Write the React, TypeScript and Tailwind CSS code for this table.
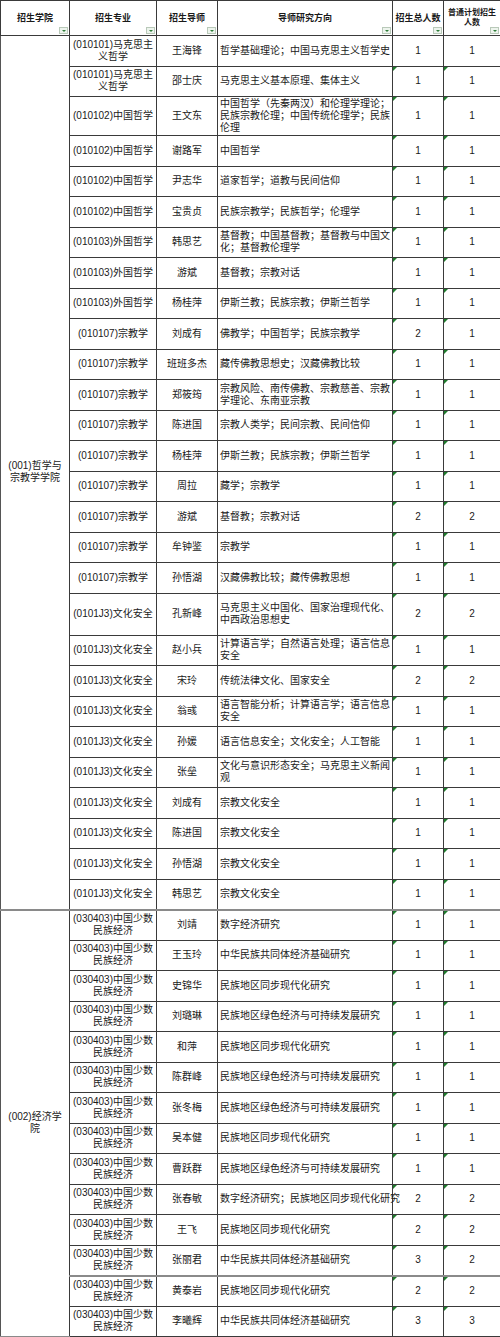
import React from "react";

type Row = {
  major: string[];
  tutor: string;
  dir: string[];
  total: number;
  plan: number;
  h?: string;
  grayTop?: boolean;
};

const m = (code: string, name: string) => [`(${code})${name}`];
const MKS = ["(010101)马克思主", "义哲学"];
const SSMZ = ["(030403)中国少数", "民族经济"];

const philosophy: Row[] = [
  { major: MKS, tutor: "王海锋", dir: ["哲学基础理论；中国马克思主义哲学史"], total: 1, plan: 1 },
  { major: MKS, tutor: "邵士庆", dir: ["马克思主义基本原理、集体主义"], total: 1, plan: 1 },
  {
    major: m("010102", "中国哲学"),
    tutor: "王文东",
    dir: ["中国哲学（先秦两汉）和伦理学理论；", "民族宗教伦理；中国传统伦理学；民族", "伦理"],
    total: 1,
    plan: 1,
    h: "h-[39px]",
  },
  { major: m("010102", "中国哲学"), tutor: "谢路军", dir: ["中国哲学"], total: 1, plan: 1 },
  { major: m("010102", "中国哲学"), tutor: "尹志华", dir: ["道家哲学；道教与民间信仰"], total: 1, plan: 1 },
  { major: m("010102", "中国哲学"), tutor: "宝贵贞", dir: ["民族宗教学；民族哲学；伦理学"], total: 1, plan: 1 },
  { major: m("010103", "外国哲学"), tutor: "韩思艺", dir: ["基督教；中国基督教；基督教与中国文", "化；基督教伦理学"], total: 1, plan: 1 },
  { major: m("010103", "外国哲学"), tutor: "游斌", dir: ["基督教；宗教对话"], total: 1, plan: 1 },
  { major: m("010103", "外国哲学"), tutor: "杨桂萍", dir: ["伊斯兰教；民族宗教；伊斯兰哲学"], total: 1, plan: 1 },
  { major: m("010107", "宗教学"), tutor: "刘成有", dir: ["佛教学；中国哲学；民族宗教学"], total: 2, plan: 1 },
  { major: m("010107", "宗教学"), tutor: "班班多杰", dir: ["藏传佛教思想史；汉藏佛教比较"], total: 1, plan: 1 },
  { major: m("010107", "宗教学"), tutor: "郑筱筠", dir: ["宗教风险、南传佛教、宗教慈善、宗教", "学理论、东南亚宗教"], total: 1, plan: 1 },
  { major: m("010107", "宗教学"), tutor: "陈进国", dir: ["宗教人类学；民间宗教、民间信仰"], total: 1, plan: 1 },
  { major: m("010107", "宗教学"), tutor: "杨桂萍", dir: ["伊斯兰教；民族宗教；伊斯兰哲学"], total: 1, plan: 1 },
  { major: m("010107", "宗教学"), tutor: "周拉", dir: ["藏学；宗教学"], total: 1, plan: 1 },
  { major: m("010107", "宗教学"), tutor: "游斌", dir: ["基督教；宗教对话"], total: 2, plan: 2 },
  { major: m("010107", "宗教学"), tutor: "牟钟鉴", dir: ["宗教学"], total: 1, plan: 1 },
  { major: m("010107", "宗教学"), tutor: "孙悟湖", dir: ["汉藏佛教比较；藏传佛教思想"], total: 1, plan: 1 },
  {
    major: m("0101J3", "文化安全"),
    tutor: "孔新峰",
    dir: ["马克思主义中国化、国家治理现代化、", "中西政治思想史"],
    total: 2,
    plan: 2,
    h: "h-[42px]",
  },
  { major: m("0101J3", "文化安全"), tutor: "赵小兵", dir: ["计算语言学；自然语言处理；语言信息", "安全"], total: 1, plan: 1 },
  { major: m("0101J3", "文化安全"), tutor: "宋玲", dir: ["传统法律文化、国家安全"], total: 2, plan: 2 },
  { major: m("0101J3", "文化安全"), tutor: "翁彧", dir: ["语言智能分析；计算语言学；语言信息", "安全"], total: 1, plan: 1 },
  { major: m("0101J3", "文化安全"), tutor: "孙媛", dir: ["语言信息安全；文化安全；人工智能"], total: 1, plan: 1 },
  { major: m("0101J3", "文化安全"), tutor: "张垒", dir: ["文化与意识形态安全；马克思主义新闻", "观"], total: 1, plan: 1 },
  { major: m("0101J3", "文化安全"), tutor: "刘成有", dir: ["宗教文化安全"], total: 1, plan: 1 },
  { major: m("0101J3", "文化安全"), tutor: "陈进国", dir: ["宗教文化安全"], total: 1, plan: 1 },
  { major: m("0101J3", "文化安全"), tutor: "孙悟湖", dir: ["宗教文化安全"], total: 1, plan: 1 },
  { major: m("0101J3", "文化安全"), tutor: "韩思艺", dir: ["宗教文化安全"], total: 1, plan: 1 },
];

const economics: Row[] = [
  { major: SSMZ, tutor: "刘靖", dir: ["数字经济研究"], total: 1, plan: 1 },
  { major: SSMZ, tutor: "王玉玲", dir: ["中华民族共同体经济基础研究"], total: 1, plan: 1 },
  { major: SSMZ, tutor: "史锦华", dir: ["民族地区同步现代化研究"], total: 1, plan: 1 },
  { major: SSMZ, tutor: "刘璐琳", dir: ["民族地区绿色经济与可持续发展研究"], total: 1, plan: 1 },
  { major: SSMZ, tutor: "和萍", dir: ["民族地区同步现代化研究"], total: 1, plan: 1 },
  { major: SSMZ, tutor: "陈群峰", dir: ["民族地区绿色经济与可持续发展研究"], total: 1, plan: 1 },
  { major: SSMZ, tutor: "张冬梅", dir: ["民族地区绿色经济与可持续发展研究"], total: 1, plan: 1 },
  { major: SSMZ, tutor: "吴本健", dir: ["民族地区同步现代化研究"], total: 1, plan: 1 },
  { major: SSMZ, tutor: "曹跃群", dir: ["民族地区绿色经济与可持续发展研究"], total: 1, plan: 1 },
  { major: SSMZ, tutor: "张春敏", dir: ["数字经济研究；民族地区同步现代化研究"], total: 2, plan: 2 },
  { major: SSMZ, tutor: "王飞", dir: ["民族地区同步现代化研究"], total: 2, plan: 2 },
  { major: SSMZ, tutor: "张丽君", dir: ["中华民族共同体经济基础研究"], total: 3, plan: 2 },
  { major: SSMZ, tutor: "黄泰岩", dir: ["民族地区同步现代化研究"], total: 2, plan: 2, grayTop: true },
  { major: SSMZ, tutor: "李曦辉", dir: ["中华民族共同体经济基础研究"], total: 3, plan: 3 },
];

function Lines({ lines }: { lines: string[] }) {
  return (
    <>
      {lines.map((l, i) => (
        <div key={i}>{l}</div>
      ))}
    </>
  );
}

function FilterBtn() {
  return (
    <span className="absolute right-[1px] bottom-[1px] flex h-[7px] w-[9px] items-center justify-center border border-[#b9c9b9] bg-[#edf4ed]">
      <span className="h-0 w-0 border-x-[2px] border-t-[2px] border-x-transparent border-t-[#2f7d3a]" />
    </span>
  );
}

function Mark() {
  return <span className="absolute left-0 top-0 h-0 w-0 border-r-[4px] border-t-[4px] border-r-transparent border-t-[#1e7b2c]" />;
}

const td = "border border-[#3a3a3a] px-[2px] align-middle";

function Group({ name, rows, first }: { name: string[]; rows: Row[]; first?: boolean }) {
  return (
    <>
      {rows.map((r, i) => {
        const top = (i === 0 && !first) || r.grayTop ? " border-t-2 border-t-[#8a8a8a]" : "";
        const mark = !(first && i === 0);
        return (
          <tr key={i} className={r.h ?? "h-[30.5px]"}>
            {i === 0 && (
              <td rowSpan={rows.length} className={`${td} border-l-[#555] text-center${top} border-b-2 border-b-[#8a8a8a]`}>
                <Lines lines={name} />
              </td>
            )}
            <td className={`${td} whitespace-nowrap text-center${top}`}>
              <Lines lines={r.major} />
            </td>
            <td className={`${td} text-center${top}`}>{r.tutor}</td>
            <td className={`${td} whitespace-nowrap text-left${top}`}>
              <Lines lines={r.dir} />
            </td>
            <td className={`${td} relative text-center${top}`}>
              {mark && <Mark />}
              {r.total}
            </td>
            <td className={`${td} relative text-center${top}`}>
              {mark && <Mark />}
              {r.plan}
            </td>
          </tr>
        );
      })}
    </>
  );
}

export default function App() {
  const th = "relative border border-[#3a3a3a] px-[2px] align-middle font-bold text-center";
  return (
    <div
      className="w-[500px] bg-white text-[#1a1a1a]"
      style={{ fontFamily: '"Liberation Sans", "Noto Sans CJK SC", sans-serif' }}
    >
      <table className="w-[500px] table-fixed border-collapse text-[10px] leading-[12px]">
        <colgroup>
          <col className="w-[69px]" />
          <col className="w-[87px]" />
          <col className="w-[61px]" />
          <col className="w-[175px]" />
          <col className="w-[51px]" />
          <col className="w-[57px]" />
        </colgroup>
        <thead>
          <tr className="h-[35px] text-[9px] leading-[11px]">
            <th className={th}>
              招生学院
              <FilterBtn />
            </th>
            <th className={th}>
              招生专业
              <FilterBtn />
            </th>
            <th className={th}>
              招生导师
              <FilterBtn />
            </th>
            <th className={th}>
              导师研究方向
              <FilterBtn />
            </th>
            <th className={th}>
              招生总人数
              <FilterBtn />
            </th>
            <th className={`${th} text-[8px] leading-[10px]`}>
              <div>普通计划招生</div>
              <div>人数</div>
              <FilterBtn />
            </th>
          </tr>
        </thead>
        <tbody>
          <Group name={["(001)哲学与", "宗教学学院"]} rows={philosophy} first />
          <Group name={["(002)经济学", "院"]} rows={economics} />
        </tbody>
      </table>
    </div>
  );
}
